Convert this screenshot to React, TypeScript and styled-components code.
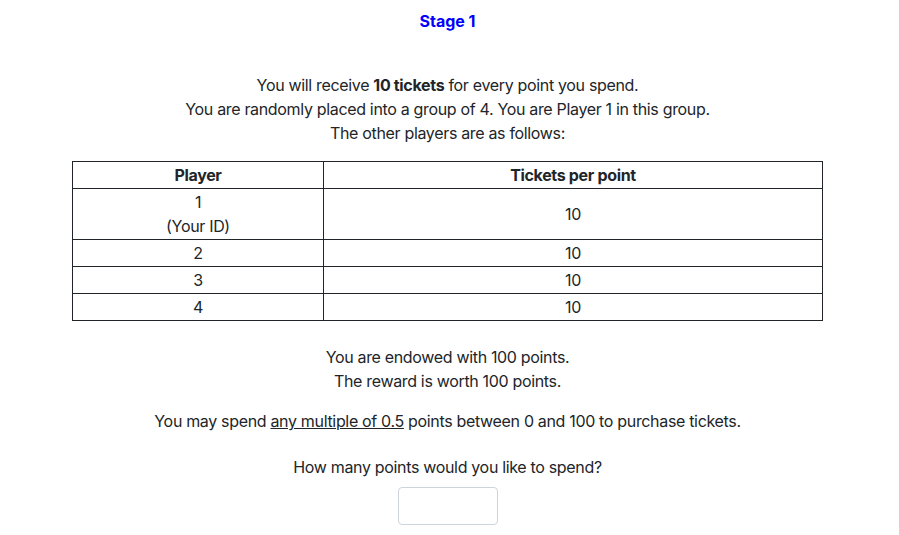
import React from "react";
import styled, { createGlobalStyle } from "styled-components";

const Global = createGlobalStyle`
  html, body { margin: 0; padding: 0; background: #fff; }
  body {
    font-family: Inter, "Noto Sans", sans-serif;
    font-size: 16px;
    line-height: 24px;
    color: #212529;
    letter-spacing: -0.33px;
  }
`;

const Page = styled.main`
  padding: 9px 4px 0 0;
  display: flex;
  flex-direction: column;
  align-items: center;
`;

const Title = styled.h1`
  margin: 0;
  font-size: 16px;
  line-height: 24px;
  font-weight: 700;
  color: #0000ff;
  letter-spacing: 0;
`;

const Para = styled.p<{ $top: number }>`
  margin: ${(p) => p.$top}px 0 0;
  text-align: center;
`;

const Table = styled.table`
  margin-top: 16px;
  width: 751px;
  border-collapse: collapse;
`;

const Th = styled.th<{ $w?: number }>`
  border: 1px solid #212529;
  padding: 1px;
  font-weight: 700;
  text-align: center;
  width: ${(p) => (p.$w ? `${p.$w}px` : "auto")};
`;

const Td = styled.td`
  border: 1px solid #212529;
  padding: 1px;
  text-align: center;
`;

const Underline = styled.span`
  text-decoration: underline;
`;

const Input = styled.input`
  margin-top: 8px;
  width: 100px;
  height: 38px;
  box-sizing: border-box;
  border: 1px solid #ced4da;
  border-radius: 4px;
  font: inherit;
  padding: 6px 12px;
  margin-left: 1px;
`;

const rows = [
  { p: "2", t: "10" },
  { p: "3", t: "10" },
  { p: "4", t: "10" },
];

export default function App() {
  return (
    <>
      <Global />
      <Page>
        <Title>Stage 1</Title>
        <Para $top={40}>
          You will receive <b>10 tickets</b> for every point you spend.
          <br />
          You are randomly placed into a group of 4. You are Player 1 in this group.
          <br />
          The other players are as follows:
        </Para>
        <Table>
          <thead>
            <tr>
              <Th $w={248}>Player</Th>
              <Th>Tickets per point</Th>
            </tr>
          </thead>
          <tbody>
            <tr>
              <Td>
                1
                <br />
                (Your ID)
              </Td>
              <Td>10</Td>
            </tr>
            {rows.map((r) => (
              <tr key={r.p}>
                <Td>{r.p}</Td>
                <Td>{r.t}</Td>
              </tr>
            ))}
          </tbody>
        </Table>
        <Para $top={24}>
          You are endowed with 100 points.
          <br />
          The reward is worth 100 points.
        </Para>
        <Para $top={16}>
          You may spend <Underline>any multiple of 0.5</Underline> points between 0 and 100 to purchase tickets.
        </Para>
        <Para $top={22}>How many points would you like to spend?</Para>
        <Input type="text" />
      </Page>
    </>
  );
}
